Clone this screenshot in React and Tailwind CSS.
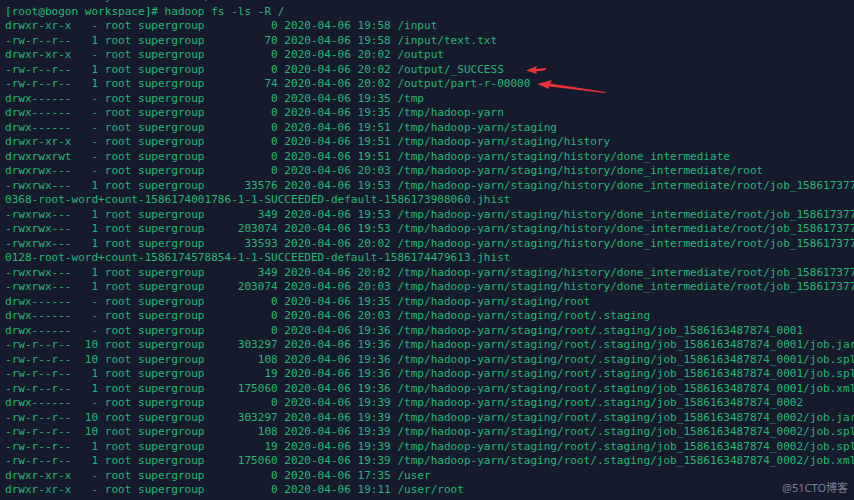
import React from "react";

const D = "2020-04-06";
const H = "/tmp/hadoop-yarn/staging/history/done_intermediate/root/job_158617377";
const S1 = "/tmp/hadoop-yarn/staging/root/.staging/job_1586163487874_0001";
const S2 = "/tmp/hadoop-yarn/staging/root/.staging/job_1586163487874_0002";

const rows = [
  ["drwxr-xr-x", "-", "0", "19:58", "/input"],
  ["-rw-r--r--", "1", "70", "19:58", "/input/text.txt"],
  ["drwxr-xr-x", "-", "0", "20:02", "/output"],
  ["-rw-r--r--", "1", "0", "20:02", "/output/_SUCCESS"],
  ["-rw-r--r--", "1", "74", "20:02", "/output/part-r-00000"],
  ["drwx------", "-", "0", "19:35", "/tmp"],
  ["drwx------", "-", "0", "19:35", "/tmp/hadoop-yarn"],
  ["drwx------", "-", "0", "19:51", "/tmp/hadoop-yarn/staging"],
  ["drwxr-xr-x", "-", "0", "19:51", "/tmp/hadoop-yarn/staging/history"],
  ["drwxrwxrwt", "-", "0", "19:51", "/tmp/hadoop-yarn/staging/history/done_intermediate"],
  ["drwxrwx---", "-", "0", "20:03", "/tmp/hadoop-yarn/staging/history/done_intermediate/root"],
  ["-rwxrwx---", "1", "33576", "19:53", H],
  "0368-root-word+count-1586174001786-1-1-SUCCEEDED-default-1586173908060.jhist",
  ["-rwxrwx---", "1", "349", "19:53", H],
  ["-rwxrwx---", "1", "203074", "19:53", H],
  ["-rwxrwx---", "1", "33593", "20:02", H],
  "0128-root-word+count-1586174578854-1-1-SUCCEEDED-default-1586174479613.jhist",
  ["-rwxrwx---", "1", "349", "20:02", H],
  ["-rwxrwx---", "1", "203074", "20:03", H],
  ["drwx------", "-", "0", "19:35", "/tmp/hadoop-yarn/staging/root"],
  ["drwx------", "-", "0", "20:03", "/tmp/hadoop-yarn/staging/root/.staging"],
  ["drwx------", "-", "0", "19:36", S1],
  ["-rw-r--r--", "10", "303297", "19:36", S1 + "/job.jar"],
  ["-rw-r--r--", "10", "108", "19:36", S1 + "/job.split"],
  ["-rw-r--r--", "1", "19", "19:36", S1 + "/job.splitmetainfo"],
  ["-rw-r--r--", "1", "175060", "19:36", S1 + "/job.xml"],
  ["drwx------", "-", "0", "19:39", S2],
  ["-rw-r--r--", "10", "303297", "19:39", S2 + "/job.jar"],
  ["-rw-r--r--", "10", "108", "19:39", S2 + "/job.split"],
  ["-rw-r--r--", "1", "19", "19:39", S2 + "/job.splitmetainfo"],
  ["-rw-r--r--", "1", "175060", "19:39", S2 + "/job.xml"],
  ["drwxr-xr-x", "-", "0", "17:35", "/user"],
  ["drwxr-xr-x", "-", "0", "19:11", "/user/root"],
  ["drwxr-xr-x", "-", "0", "19:11", "/user/root/wordcount"],
];

function fmt(r) {
  if (typeof r === "string") return r;
  const [p, n, s, t, path] = r;
  return `${p}${n.padStart(4, " ")} root supergroup ${s.padStart(10, " ")} ${D} ${t} ${path}`;
}

export default function App() {
  const lines = [
    "              syste in folder /",
    "[root@bogon workspace]# hadoop fs -ls -R /",
    ...rows.map(fmt),
  ];
  return (
    <div className="relative w-[854px] h-[500px] overflow-hidden bg-[#151a2c]">
      <div
        className="flex flex-col pl-[5px] -mt-[10px] text-[#22b775] text-[11.05px] leading-[14.5px] whitespace-pre"
        style={{ fontFamily: '"DejaVu Sans Mono", monospace' }}
      >
        {lines.map((l, i) => (
          <div key={i} className="h-[14.5px]">{l}</div>
        ))}
      </div>
      <svg className="absolute left-0 top-0" width="854" height="500" viewBox="0 0 854 500">
        <path d="M526 70.5 L537 66 L536 69 L546 68 L546 70 L536 71.5 L537 74 Z" fill="#e8333a" />
        <path d="M537 84 L552 80 L550 83.5 L606 92 L605 93 L549 86.5 L549 89 Z" fill="#e8333a" />
      </svg>
      <div
        className="absolute right-[6px] bottom-[4px] text-[11px] text-[#7d8291]"
        style={{ fontFamily: '"Noto Sans", "Noto Sans CJK SC", sans-serif' }}
      >
        @51CTO博客
      </div>
    </div>
  );
}
